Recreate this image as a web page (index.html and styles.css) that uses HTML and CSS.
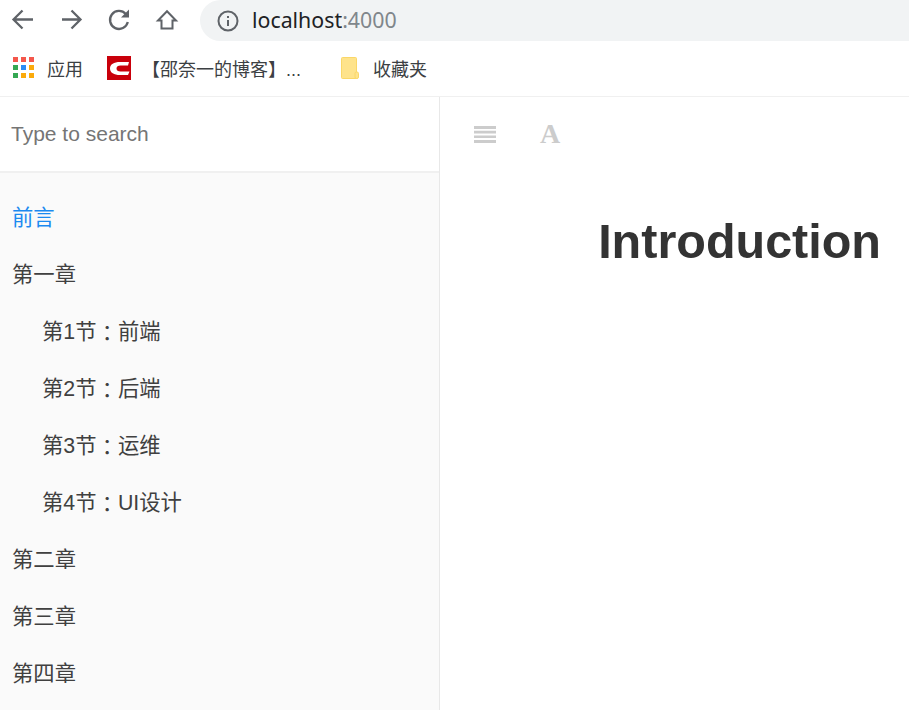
FILE: index.html
```html
<!DOCTYPE html>
<html lang="zh">
<head>
<meta charset="utf-8">
<title>Introduction</title>
<link rel="stylesheet" href="styles.css">
</head>
<body>
<div class="chrome">
  <div class="toolbar">
    <svg class="nav" viewBox="0 0 24 24"><path d="M22 11.500H3.500M11.500 2.500l-9 9 9 9"/></svg>
    <svg class="nav" viewBox="0 0 24 24"><path d="M3 11.500h18M12.500 2.500l9 9-9 9"/></svg>
    <svg class="nav" viewBox="0 0 24 24"><path d="M18.800 6a9 9 0 1 0 2 8"/><path class="fill" d="M22 1.500v8h-8z"/></svg>
    <svg class="nav nav-last" viewBox="0 0 24 24"><path d="M12 3.200 3 12.500h3.500v8h11v-8H21z"/></svg>
    <div class="omnibox">
      <svg class="info" viewBox="0 0 22 22"><circle cx="11" cy="11" r="9.500"/><path d="M11 10v6M11 6v2"/></svg>
      <span class="url">localhost<span class="port">:4000</span></span>
    </div>
  </div>
  <div class="bookmarks">
    <div class="bm bm-apps">
      <div class="apps">
        <i class="r"></i><i class="r"></i><i class="r"></i>
        <i class="g"></i><i class="b"></i><i class="y"></i>
        <i class="g"></i><i class="y"></i><i class="y"></i>
      </div>
      <span>应用</span>
    </div>
    <div class="bm bm-blog">
      <svg class="logo" viewBox="0 0 24 24"><rect width="24" height="24" fill="#c9000b"/><path d="M22 6H13C7 6 3 8.300 3 12.500S7 19 13 19h8l1.500-3.500h-9C11 15.500 9.500 14.300 9.500 12.500S11 9.500 13.500 9.500H21z" fill="#fff"/></svg>
      <span>【邵奈一的博客】...</span>
    </div>
    <div class="bm bm-fav">
      <svg class="folder" viewBox="0 0 18 22"><path d="M1.500.500h13a1 1 0 0 1 1 1V21.500H1.500a1 1 0 0 1-1-1V1.500a1 1 0 0 1 1-1z" fill="#fee38b" stroke="#fad768"/><rect x="14" y="15" width="3.500" height="6.500" rx="1.500" fill="#fee38b" stroke="#fad768"/></svg>
      <span>收藏夹</span>
    </div>
  </div>
</div>
<div class="app">
  <aside class="sidebar">
    <div class="search">Type to search</div>
    <ul class="summary">
      <li class="active">前言</li>
      <li>第一章</li>
      <li class="sub">第1节<span class="colon" lang="zh-Hant">：</span>前端</li>
      <li class="sub">第2节<span class="colon" lang="zh-Hant">：</span>后端</li>
      <li class="sub">第3节<span class="colon" lang="zh-Hant">：</span>运维</li>
      <li class="sub">第4节<span class="colon" lang="zh-Hant">：</span>UI设计</li>
      <li>第二章</li>
      <li>第三章</li>
      <li>第四章</li>
    </ul>
  </aside>
  <main class="main">
    <div class="tools">
      <svg class="menu-icon" viewBox="0 0 22 17"><path d="M0 0h22v3H0zM0 4.700h22v2.700H0zM0 9.400h22v2.700H0zM0 14h22v3H0z"/></svg>
      <span class="font-icon">A</span>
    </div>
    <h1>Introduction</h1>
  </main>
</div>
</body>
</html>
```
FILE: styles.css
```css
* { box-sizing: border-box; }
html, body { margin: 0; padding: 0; height: 100%; overflow: hidden; }
body {
  width: 909px;
  height: 710px;
  background: #fff;
  font-family: "Liberation Sans", "Noto Sans CJK SC", sans-serif;
  display: flex;
  flex-direction: column;
}
.chrome { height: 97px; flex: none; border-bottom: 1px solid #f0f0f0; }
.toolbar { height: 41px; display: flex; align-items: flex-start; padding-left: 11px; }
.nav { width: 24px; height: 24px; margin: 8px 24px 0 0; flex: none; fill: none; stroke: #5f6368; stroke-width: 2.300; }
.nav .fill { fill: #5f6368; stroke: none; }
.nav-last { margin-right: 21px; stroke-width: 2; }
.omnibox {
  flex: 1;
  height: 41px;
  background: #f1f3f4;
  border-radius: 21px 0 0 21px;
  display: flex;
  align-items: center;
  padding-left: 17px;
}
.info { width: 22px; height: 22px; fill: none; stroke: #5f6368; stroke-width: 2; }
.url { margin: 0 0 2px 13px; font-family: "Noto Sans", sans-serif; font-size: 21.330px; color: #202124; }
.port { color: #80868b; }
.bookmarks { height: 55px; display: flex; align-items: center; font-size: 18px; color: #3c4043; }
.bm { display: flex; align-items: center; flex: none; }
.bm span { margin-bottom: 2px; }
.bm-apps { margin-left: 13px; width: 94px; }
.bm-apps span { margin-left: 13px; }
.apps { display: grid; grid-template-columns: repeat(3, 5px); grid-auto-rows: 5px; gap: 3px; width: 21px; margin-top: -3px; }
.apps i { display: block; }
.apps .r { background: #f4574b; }
.apps .g { background: #34a853; }
.apps .b { background: #2b8cf4; }
.apps .y { background: #fbaa0b; }
.bm-blog { width: 233px; }
.logo { width: 24px; height: 24px; margin-top: -2px; }
.bm-blog span { margin-left: 11px; }
.folder { width: 18px; height: 22px; margin: -2px 0 0 1px; }
.bm-fav span { margin-left: 14px; }
.app { flex: 1; display: flex; min-height: 0; }
.sidebar { width: 440px; flex: none; background: #fafafa; border-right: 1px solid #e8e8e8; }
.search {
  height: 76px;
  background: #fff;
  border-bottom: 2px solid #f0f0f0;
  padding-left: 11px;
  line-height: 74px;
  font-size: 21px;
  color: #757575;
}
.summary { list-style: none; margin: 0; padding: 17px 0 0 12px; font-size: 21.330px; color: #404040; }
.summary li { height: 57px; line-height: 57px; }
.summary .active { color: #1c8af0; }
.summary .sub { padding-left: 30px; }
.colon { font-family: "Noto Sans CJK TC", sans-serif; line-height: 0; vertical-align: -2px; }
.main { flex: 1; min-width: 0; }
.tools { height: 76px; display: flex; align-items: center; padding-left: 34px; color: #ccc; }
.menu-icon { width: 22px; height: 17px; fill: #ccc; margin-top: -2px; }
.font-icon { margin: -2px 0 0 44px; font-family: "Liberation Serif", serif; font-weight: 700; font-size: 28px; line-height: 28px; }
h1 { margin: 40px 28px 0 0; text-align: right; font-size: 48.500px; line-height: 56px; font-weight: 700; color: #333; }
```
